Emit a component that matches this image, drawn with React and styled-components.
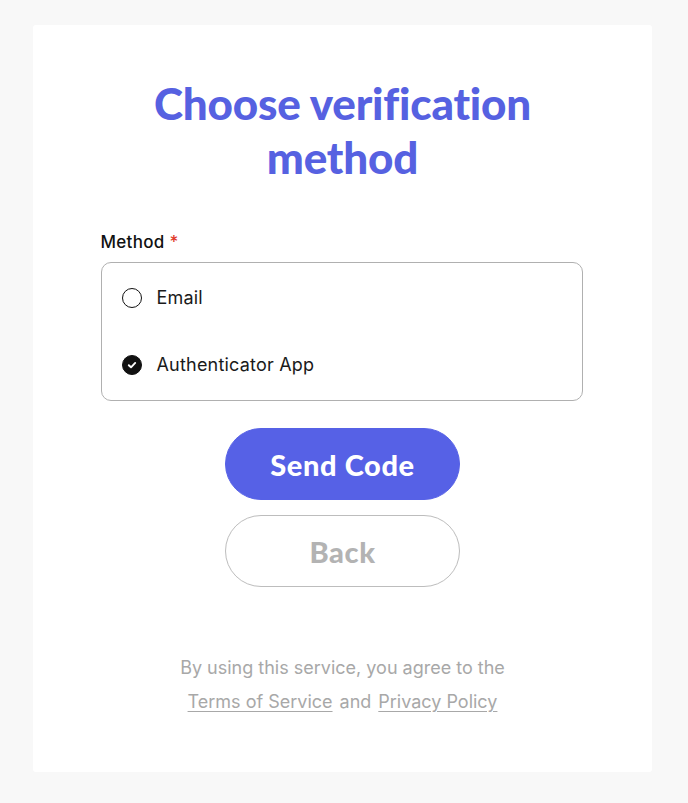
import React, { useState } from "react";
import styled, { createGlobalStyle } from "styled-components";

const GlobalStyle = createGlobalStyle`
 html, body {
  margin: 0;
  padding: 0;
  background: #f8f8f8;
 }
 body {
  font-family: Lato, "Open Sans", sans-serif;
 }
`;

const options = [
 { id: "email", label: "Email" },
 { id: "app", label: "Authenticator App" },
];

const App = () => {
 const [method, setMethod] = useState("app");

 return (
  <Page>
   <GlobalStyle />
   <Card>
    <Title>Choose verification method</Title>
    <Field>
     <Label>
      Method <Required>*</Required>
     </Label>
     <OptionBox>
      {options.map((o) => (
       <Option key={o.id} onClick={() => setMethod(o.id)}>
        <RadioMark checked={method === o.id}>
         {method === o.id && (
          <svg width='12' height='12' viewBox='0 0 12 12'>
           <path
            d='M2.8 6.2 L5 8.3 L9.2 3.9'
            fill='none'
            stroke='#fff'
            strokeWidth='1.9'
            strokeLinecap='round'
            strokeLinejoin='round'
           />
          </svg>
         )}
        </RadioMark>
        <OptionText>{o.label}</OptionText>
       </Option>
      ))}
     </OptionBox>
    </Field>
    <Buttons>
     <PillButton primary>Send Code</PillButton>
     <PillButton>Back</PillButton>
    </Buttons>
    <Footer>
     <FooterLine>By using this service, you agree to the</FooterLine>
     <FooterLine>
      <FooterLink>Terms of Service</FooterLink>
      <Joiner>and</Joiner>
      <FooterLink>Privacy Policy</FooterLink>
     </FooterLine>
    </Footer>
   </Card>
  </Page>
 );
};
export default App;

const Page = styled.div`
 min-height: 803px;
 display: flex;
 justify-content: flex-start;
 padding: 25px 0 31px 33px;
 box-sizing: border-box;
 background: #f8f8f8;
`;
const Card = styled.div`
 width: 619px;
 display: flex;
 flex-direction: column;
 align-items: center;
 padding: 51px 0 0 0;
 border-radius: 3px;
 box-sizing: border-box;
 background-color: #ffffff;
`;
const Title = styled.h1`
 width: 440px;
 margin: 0;
 color: #5661e1;
 font-family: Lato, sans-serif;
 font-size: 44px;
 font-weight: 900;
 line-height: 54px;
 letter-spacing: -0.2px;
 text-align: center;
`;
const Field = styled.div`
 width: 482px;
 display: flex;
 flex-direction: column;
 gap: 10px;
 margin-top: 48px;
 margin-right: 2px;
`;
const Label = styled.div`
 color: #111111;
 font-family: Inter, sans-serif;
 font-size: 17px;
 font-weight: 500;
 line-height: 20px;
 letter-spacing: 0.3px;
`;
const Required = styled.span`
 color: #e03a2c;
`;
const OptionBox = styled.div`
 display: flex;
 flex-direction: column;
 gap: 45px;
 padding: 24px 20px 24px 20px;
 border: 1px solid #b0b0b0;
 border-radius: 10px;
 box-sizing: border-box;
`;
const Option = styled.label`
 display: flex;
 align-items: center;
 gap: 15px;
 cursor: pointer;
`;
const RadioMark = styled.span`
 width: 20px;
 height: 20px;
 display: flex;
 align-items: center;
 justify-content: center;
 border: 1.5px solid #111111;
 border-radius: 50%;
 box-sizing: border-box;
 background: ${(p) => (p.checked ? "#111111" : "#ffffff")};
`;
const OptionText = styled.span`
 color: #1a1a1a;
 font-family: Inter, sans-serif;
 font-size: 18px;
 line-height: 22px;
 letter-spacing: 0.2px;
`;
const Buttons = styled.div`
 display: flex;
 flex-direction: column;
 gap: 15px;
 margin-top: 27px;
`;
const PillButton = styled.button`
 width: 235px;
 height: 72px;
 border-radius: 36px;
 border: 1px solid ${(p) => (p.primary ? "#5661e6" : "#bdbdbd")};
 background: ${(p) => (p.primary ? "#5661e6" : "#ffffff")};
 color: ${(p) => (p.primary ? "#ffffff" : "#b3b3b3")};
 font-family: Lato, sans-serif;
 font-size: 29px;
 font-weight: 900;
 letter-spacing: 0.6px;
 cursor: pointer;
`;
const Footer = styled.div`
 display: flex;
 flex-direction: column;
 align-items: center;
 gap: 12px;
 margin-top: 70px;
`;
const FooterLine = styled.div`
 display: flex;
 align-items: baseline;
 color: #a8a8a8;
 font-family: Inter, sans-serif;
 font-size: 18px;
 line-height: 22px;
`;
const Joiner = styled.span`
 margin: 0 7px;
`;
const FooterLink = styled.a`
 color: #a8a8a8;
 text-decoration: underline;
 text-underline-offset: 3px;
 cursor: pointer;
`;
